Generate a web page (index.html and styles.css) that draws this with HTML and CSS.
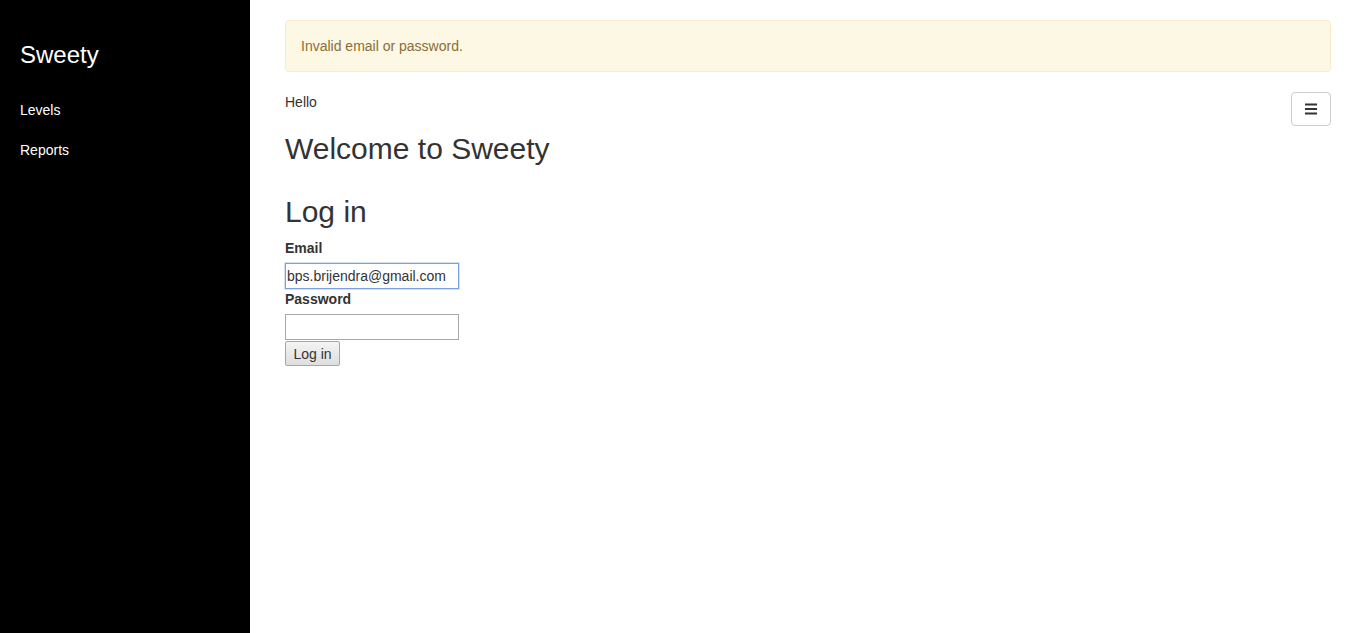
FILE: index.html
```html
<!DOCTYPE html>
<html>
<head>
<meta charset="utf-8">
<link rel="stylesheet" href="styles.css">
</head>
<body>
<div class="layout">
  <nav class="sidebar">
    <div class="brand">Sweety</div>
    <ul class="nav">
      <li><a href="#">Levels</a></li>
      <li><a href="#">Reports</a></li>
    </ul>
  </nav>
  <main class="content">
    <div class="alert">Invalid email or password.</div>
    <div class="topline">
      <span class="hello">Hello</span>
      <button class="toggle" type="button" aria-label="Menu">
        <svg width="12" height="12" viewBox="0 0 12 12"><rect x="0" y="0.5" width="12" height="2" fill="#333"/><rect x="0" y="5" width="12" height="2" fill="#333"/><rect x="0" y="9.5" width="12" height="2" fill="#333"/></svg>
      </button>
    </div>
    <h2 class="heading">Welcome to Sweety</h2>
    <h2 class="heading section">Log in</h2>
    <form class="login">
      <label class="lbl">Email</label>
      <input class="field focused" type="text" value="bps.brijendra@gmail.com">
      <label class="lbl">Password</label>
      <input class="field" type="password">
      <button class="submit" type="button">Log in</button>
    </form>
  </main>
</div>
</body>
</html>
```
FILE: styles.css
```css
html, body {
  margin: 0;
  padding: 0;
  height: 100%;
}
body {
  font-family: "Liberation Sans", Arial, sans-serif;
  font-size: 14px;
  line-height: 20px;
  color: #333;
  background: #fff;
}
.layout {
  display: flex;
  min-height: 100%;
}
.sidebar {
  width: 250px;
  flex: 0 0 250px;
  background: #000;
  color: #fff;
  padding: 0 20px;
  box-sizing: border-box;
  min-height: 633px;
}
.brand {
  font-size: 24px;
  line-height: 30px;
  padding-top: 40px;
  margin-bottom: 30px;
}
.nav {
  list-style: none;
  margin: 0;
  padding: 0;
  display: flex;
  flex-direction: column;
  gap: 20px;
}
.nav a {
  color: #fff;
  text-decoration: none;
}
.content {
  flex: 1;
  padding: 20px 35px;
}
.alert {
  background: #fcf8e3;
  border: 1px solid #faebcc;
  color: #8a6d3b;
  border-radius: 4px;
  padding: 15px;
  margin-bottom: 20px;
}
.topline {
  display: flex;
  justify-content: space-between;
  align-items: flex-start;
  height: 20px;
}
.toggle {
  width: 40px;
  height: 34px;
  border: 1px solid #ccc;
  border-radius: 4px;
  background: #fff;
  padding: 0;
  display: flex;
  align-items: center;
  justify-content: center;
}
.toggle svg {
  display: block;
}
.heading {
  font-family: "Liberation Sans", Arial, sans-serif;
  font-weight: 500;
  font-size: 30px;
  line-height: 33px;
  margin: 20px 0 10px;
  color: #333;
}
.heading.section {
  margin-top: 30px;
}
.login {
  display: flex;
  flex-direction: column;
  align-items: flex-start;
}
.lbl {
  font-weight: bold;
  margin-bottom: 5px;
}
.field {
  width: 174px;
  height: 26px;
  box-sizing: border-box;
  border: 1px solid #a9a9a9;
  padding: 1px 1px;
  font-family: "Liberation Sans", Arial, sans-serif;
  font-size: 14px;
  color: #333;
  margin: 0;
  outline: none;
}
.field.focused {
  border-color: #7aa0e0;
  box-shadow: 0 0 0 0.5px #a9c1ec;
}
.submit {
  margin-top: 1px;
  height: 25px;
  width: 55px;
  padding: 0;
  font-family: "Liberation Sans", Arial, sans-serif;
  font-size: 14px;
  color: #333;
  border: 1px solid #a6a6a6;
  border-radius: 2px;
  background: linear-gradient(#f4f4f4, #dedede);
}
```
